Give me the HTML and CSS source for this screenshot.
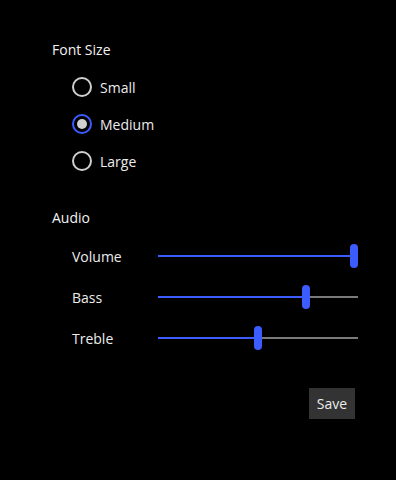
FILE: index.html
```html
<!DOCTYPE html>
<html>
<head>
<meta charset="utf-8">
<link rel="stylesheet" href="styles.css">
</head>
<body>
<div class="panel">
  <section class="group">
    <h2 class="group-title">Font Size</h2>
    <div class="radio-list">
      <label class="radio"><span class="radio-mark"></span><span class="radio-text">Small</span></label>
      <label class="radio checked"><span class="radio-mark"></span><span class="radio-text">Medium</span></label>
      <label class="radio"><span class="radio-mark"></span><span class="radio-text">Large</span></label>
    </div>
  </section>
  <section class="group audio">
    <h2 class="group-title">Audio</h2>
    <div class="slider-list">
      <div class="slider-row">
        <span class="slider-label">Volume</span>
        <div class="slider" style="--v: 1"><div class="slider-fill"></div><div class="slider-thumb"></div></div>
      </div>
      <div class="slider-row">
        <span class="slider-label">Bass</span>
        <div class="slider" style="--v: 0.75"><div class="slider-fill"></div><div class="slider-thumb"></div></div>
      </div>
      <div class="slider-row">
        <span class="slider-label">Treble</span>
        <div class="slider" style="--v: 0.5"><div class="slider-fill"></div><div class="slider-thumb"></div></div>
      </div>
    </div>
  </section>
  <div class="actions">
    <button class="save-btn">Save</button>
  </div>
</div>
</body>
</html>
```

FILE: styles.css
```css
html, body {
  margin: 0;
  padding: 0;
  background: #000;
}
body {
  font-family: "Open Sans", "Noto Sans", sans-serif;
  font-size: 14px;
  color: #ececec;
  width: 396px;
  height: 480px;
}
.panel {
  padding: 40px 0 0 52px;
  display: flex;
  flex-direction: column;
}
.group-title {
  margin: 0;
  font-size: 14px;
  font-weight: 400;
  line-height: 20px;
  color: #f2f2f2;
}
.radio-list {
  margin-top: 15px;
  padding-left: 20px;
  display: flex;
  flex-direction: column;
  gap: 13px;
}
.radio {
  display: flex;
  align-items: center;
  height: 24px;
  gap: 8px;
}
.radio-mark {
  width: 20px;
  height: 20px;
  box-sizing: border-box;
  border: 2px solid #cfcfcf;
  border-radius: 50%;
  display: flex;
  align-items: center;
  justify-content: center;
}
.radio.checked .radio-mark {
  border-color: #3c5cff;
}
.radio.checked .radio-mark::after {
  content: "";
  width: 10px;
  height: 10px;
  border-radius: 50%;
  background: #d0d0d0;
}
.audio {
  margin-top: 35px;
}
.slider-list {
  margin-top: 16px;
  padding-left: 20px;
  display: flex;
  flex-direction: column;
  gap: 17px;
}
.slider-row {
  display: flex;
  align-items: center;
  height: 24px;
}
.slider-label {
  width: 86px;
}
.slider {
  position: relative;
  width: 200px;
  height: 2px;
  background: #7a7a7a;
}
.slider-fill {
  height: 100%;
  width: calc(var(--v) * (100% - 8px) + 4px);
  background: #3c5cff;
}
.slider-thumb {
  position: absolute;
  top: -11px;
  left: calc(var(--v) * (100% - 8px));
  width: 8px;
  height: 24px;
  border-radius: 4px;
  background: #3c5cff;
}
.actions {
  margin-top: 38px;
  display: flex;
  justify-content: flex-end;
  padding-right: 41px;
}
.save-btn {
  font-family: inherit;
  font-size: 14px;
  color: #ececec;
  background: #333;
  border: none;
  width: 46px;
  height: 31px;
  padding: 0;
}
```
